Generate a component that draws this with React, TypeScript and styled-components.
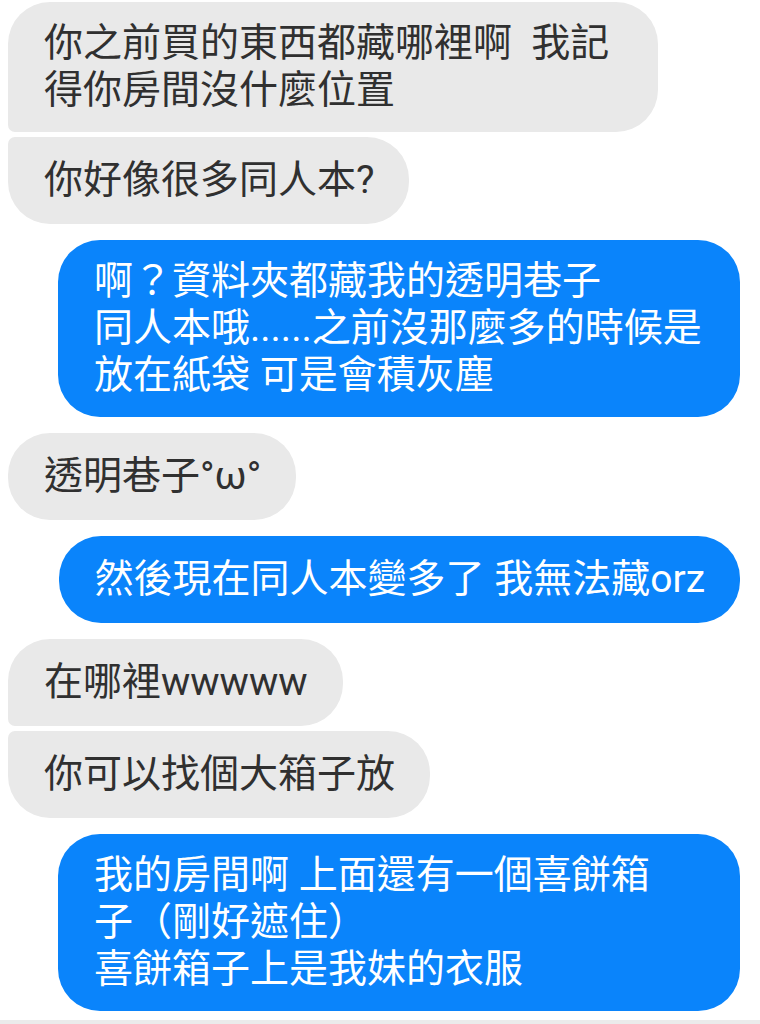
import React from "react";
import styled, { createGlobalStyle, css } from "styled-components";

const GlobalStyle = createGlobalStyle`
  html, body {
    margin: 0;
    padding: 0;
    background: #ffffff;
  }
  body {
    font-family: Roboto, "Noto Sans CJK TC", "Noto Sans CJK SC", sans-serif;
  }
`;

type Side = "in" | "out";
type Pos = "single" | "first" | "last";

const Page = styled.div`
  min-height: 1024px;
  width: 760px;
  display: flex;
  flex-direction: column;
  background: #ffffff;
`;

const Thread = styled.main`
  flex: 1;
  display: flex;
  flex-direction: column;
  gap: 16px;
  padding: 2px 20px 0 8px;
`;

const Group = styled.div<{ $side: Side }>`
  display: flex;
  flex-direction: column;
  gap: 5px;
  align-items: ${(p) => (p.$side === "in" ? "flex-start" : "flex-end")};
`;

const BIG = 42;
const SMALL = 7;

const Bubble = styled.div<{ $side: Side; $pos?: Pos; $wide?: boolean }>`
  box-sizing: border-box;
  min-height: 87px;
  display: flex;
  align-items: center;
  padding: 18px 35px 18px 36px;
  font-size: 39px;
  line-height: 47px;
  white-space: pre;
  border-radius: ${BIG}px;
  ${(p) =>
    p.$side === "in"
      ? css`
          background: #e9e9e9;
          color: #303030;
          max-width: 650px;
          ${p.$wide && "width: 650px;"}
          ${p.$pos === "first" && `border-bottom-left-radius: ${SMALL}px;`}
          ${p.$pos === "last" && `border-top-left-radius: ${SMALL}px;`}
        `
      : css`
          background: #0a84fb;
          color: #ffffff;
          max-width: 682px;
          ${p.$wide && "width: 682px;"}
        `}
`;

const Footer = styled.footer`
  height: 4px;
  background: #ebebeb;
`;

export default function App() {
  return (
    <>
      <GlobalStyle />
      <Page lang="zh-TW">
        <Thread>
          <Group $side="in">
            <Bubble $side="in" $pos="first" $wide>
              {"你之前買的東西都藏哪裡啊  我記\n得你房間沒什麼位置"}
            </Bubble>
            <Bubble $side="in" $pos="last">
              你好像很多同人本?
            </Bubble>
          </Group>
          <Group $side="out">
            <Bubble $side="out" $wide>
              {"啊？資料夾都藏我的透明巷子\n同人本哦......之前沒那麼多的時候是\n放在紙袋 可是會積灰塵"}
            </Bubble>
          </Group>
          <Group $side="in">
            <Bubble $side="in">透明巷子°ω°</Bubble>
          </Group>
          <Group $side="out">
            <Bubble $side="out">然後現在同人本變多了 我無法藏orz</Bubble>
          </Group>
          <Group $side="in">
            <Bubble $side="in" $pos="first">
              在哪裡wwwww
            </Bubble>
            <Bubble $side="in" $pos="last">
              你可以找個大箱子放
            </Bubble>
          </Group>
          <Group $side="out">
            <Bubble $side="out" $wide>
              {"我的房間啊 上面還有一個喜餅箱\n子（剛好遮住）\n喜餅箱子上是我妹的衣服"}
            </Bubble>
          </Group>
        </Thread>
        <Footer />
      </Page>
    </>
  );
}
